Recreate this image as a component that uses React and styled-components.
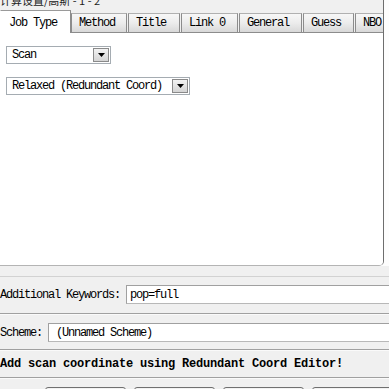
import React from "react";
import styled, { createGlobalStyle } from "styled-components";

const Global = createGlobalStyle`
  html, body { margin: 0; padding: 0; background: #f0f0f0; }
  body {
    font-family: "Liberation Mono", "Noto Sans CJK SC", monospace;
    font-size: 12px;
    color: #000;
  }
`;

const Root = styled.div`
  width: 389px;
  height: 389px;
  overflow: hidden;
  background: #f0f0f0;
  display: flex;
  flex-direction: column;
`;

const TopRow = styled.div`
  display: flex;
  background: #fdfdfd;
`;

const TopPane = styled.div`
  box-sizing: border-box;
  width: 384px;
  height: 266px;
  display: flex;
  flex-direction: column;
  overflow: hidden;
  border-right: 1px solid #6e6e6e;
  border-bottom: 1px solid #b4b4b4;
  border-bottom-right-radius: 5px;
  background: #f0f0f0;
`;

const TitleStrip = styled.div`
  height: 10px;
  overflow: hidden;
  line-height: 0;
  color: #222;
  font-family: "Noto Sans CJK SC", sans-serif;
  font-size: 11px;
  white-space: nowrap;
`;

const TabBar = styled.div`
  height: 23px;
  display: flex;
  align-items: flex-end;
  box-shadow: inset 0 -1px 0 #8c8c8c;
  white-space: nowrap;
`;

const Tab = styled.div`
  box-sizing: border-box;
  flex: none;
  width: ${(p) => p.$w}px;
  height: ${(p) => (p.$active ? 23 : 20)}px;
  margin-right: ${(p) => (p.$active ? 0 : 1)}px;
  padding-left: ${(p) => (p.$active ? 8 : 7)}px;
  padding-top: ${(p) => (p.$active ? 2 : 0)}px;
  display: flex;
  align-items: center;
  letter-spacing: -1.2px;
  border: 1px solid #8c8c8c;
  border-bottom: ${(p) => (p.$active ? "none" : "1px solid #8c8c8c")};
  border-left-color: ${(p) => (p.$active ? "transparent" : "#8c8c8c")};
  border-top-color: ${(p) => (p.$active ? "#9a9a9a" : "#b0b0b0")};
  background: ${(p) =>
    p.$active ? "#fff" : "linear-gradient(#f7f7f7, #ececec 50%, #d8d8d8)"};
`;

const Panel = styled.div`
  flex: 1;
  background: #fff;
  padding: 13px 0 0 6px;
  display: flex;
  flex-direction: column;
  align-items: flex-start;
  gap: 13px;
`;

const Combo = styled.div`
  box-sizing: border-box;
  width: ${(p) => p.$w}px;
  height: 18px;
  display: flex;
  align-items: center;
  border: 1px solid #a5acb2;
  background: #fff;
  padding: 1px;
`;

const ComboText = styled.span`
  flex: 1;
  padding-left: 4px;
  letter-spacing: -1.2px;
  white-space: nowrap;
`;

const DropButton = styled.div`
  box-sizing: border-box;
  width: 16px;
  height: 14px;
  display: flex;
  align-items: center;
  justify-content: center;
  border: 1px solid #8a8a8a;
  background: linear-gradient(#f2f2f2, #d4d4d4);
`;

const Splitter = styled.div`
  height: 10px;
  border-bottom: 1px solid #d2d2d2;
  flex: none;
`;

const FormArea = styled.div`
  width: 420px;
  display: flex;
  flex-direction: column;
`;

const FieldRow = styled.div`
  display: flex;
  align-items: center;
  gap: 6px;
  padding: ${(p) => p.$pad};
`;

const Label = styled.span`
  letter-spacing: -1.2px;
  white-space: nowrap;
`;

const TextInput = styled.div`
  box-sizing: border-box;
  flex: 1;
  height: 19px;
  display: flex;
  align-items: center;
  padding-left: ${(p) => p.$indent}px;
  background: #fff;
  border: 1px solid #a0a0a0;
  border-bottom-color: #b8b8b8;
  letter-spacing: -1.2px;
  white-space: nowrap;
`;

const Rule = styled.div`
  height: 1px;
  background: #a0a0a0;
  border-bottom: 1px solid #fafafa;
`;

const Message = styled.div`
  height: 26px;
  display: flex;
  align-items: center;
  font-weight: bold;
  letter-spacing: -0.2px;
  white-space: nowrap;
`;

const ButtonRow = styled.div`
  display: flex;
  gap: 8px;
  padding: 8px 0 0 45px;
`;

const Button = styled.div`
  box-sizing: border-box;
  flex: none;
  width: 81px;
  height: 24px;
  border: 1px solid #707070;
  border-radius: 3px;
  background: linear-gradient(#f2f2f2, #dcdcdc);
`;

const tabs = [
  { label: "Job Type", w: 71, active: true },
  { label: "Method", w: 56 },
  { label: "Title", w: 52 },
  { label: "Link 0", w: 57 },
  { label: "General", w: 63 },
  { label: "Guess", w: 51 },
  { label: "NBO", w: 40 },
];

function Arrow() {
  return (
    <svg width="7" height="4" viewBox="0 0 7 4">
      <path d="M0 0h7L3.5 4z" fill="#000" />
    </svg>
  );
}

function ComboBox({ width, value }) {
  return (
    <Combo $w={width}>
      <ComboText>{value}</ComboText>
      <DropButton>
        <Arrow />
      </DropButton>
    </Combo>
  );
}

export default function App() {
  return (
    <>
      <Global />
      <Root>
        <TopRow>
          <TopPane>
            <TitleStrip>计算设置/高斯 - 1 - 2</TitleStrip>
            <TabBar>
              {tabs.map((t) => (
                <Tab key={t.label} $w={t.w} $active={t.active}>
                  {t.label}
                </Tab>
              ))}
            </TabBar>
            <Panel>
              <ComboBox width={105} value="Scan" />
              <ComboBox width={184} value="Relaxed (Redundant Coord)" />
            </Panel>
          </TopPane>
        </TopRow>
        <Splitter />
        <FormArea>
          <FieldRow $pad="8px 0 9px 0">
            <Label>Additional Keywords:</Label>
            <TextInput $indent={3}>pop=full</TextInput>
          </FieldRow>
          <Rule />
          <FieldRow $pad="8px 0 7px 0">
            <Label>Scheme:</Label>
            <TextInput $indent={7}>(Unnamed Scheme)</TextInput>
          </FieldRow>
          <Rule />
          <Message>Add scan coordinate using Redundant Coord Editor!</Message>
          <Rule />
          <ButtonRow>
            <Button />
            <Button />
            <Button />
            <Button />
          </ButtonRow>
        </FormArea>
      </Root>
    </>
  );
}
